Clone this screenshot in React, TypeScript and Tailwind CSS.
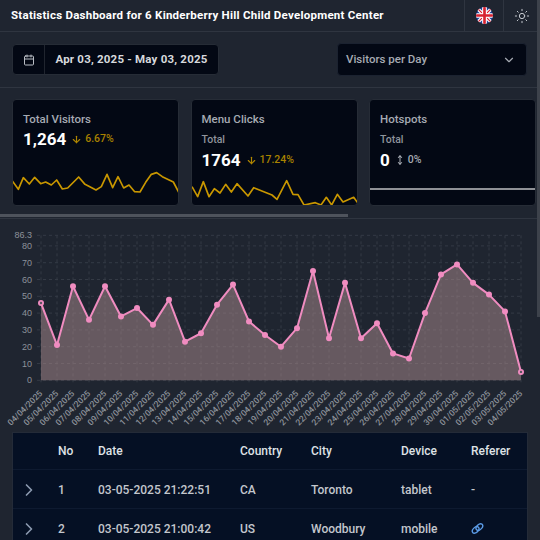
import { ArrowDown, Calendar, ChevronDown, ChevronRight, MoveVertical, Sun } from "lucide-react";

const visitors = [46, 21, 56, 36, 56, 38, 43, 33, 48, 23, 28, 45, 57, 35, 27, 20, 31, 65, 25, 58, 25, 34, 16, 13, 40, 63, 69, 58, 51, 41, 5];
const labels = [
  "04/04/2025", "05/04/2025", "06/04/2025", "07/04/2025", "08/04/2025", "09/04/2025", "10/04/2025", "11/04/2025",
  "12/04/2025", "13/04/2025", "14/04/2025", "15/04/2025", "16/04/2025", "17/04/2025", "18/04/2025", "19/04/2025",
  "20/04/2025", "21/04/2025", "22/04/2025", "23/04/2025", "24/04/2025", "25/04/2025", "26/04/2025", "27/04/2025",
  "28/04/2025", "29/04/2025", "30/04/2025", "01/05/2025", "02/05/2025", "03/05/2025", "04/05/2025",
];
const ticks = [0, 10, 20, 30, 40, 50, 60, 70, 80];

const spark1 = "34,258 52,283 67,248 85,267 101,247 119,266 134,261 151,270 167,255 184,282 200,279 233,246 252,268 285,285 301,275 318,238 335,278 351,245 368,279 384,270 401,290 417,291 434,262 451,238 467,233 484,245 517,261 536,297";
const spark2 = "570,272 587,302 604,257 621,302 637,278 654,291 671,265 688,288 705,263 738,300 755,275 810,297 825,310 854,254 873,295 888,296 906,327 940,320 957,327 973,304 989,327 1006,295 1023,318 1055,304 1072,327";

function Card({ title, sub, value, delta, flat, line, box }: { title: string; sub?: boolean; value: string; delta: string; flat?: boolean; line?: string; box?: string }) {
  return (
    <div className="w-[167px] h-[107px] shrink-0 rounded border border-[#262c36] bg-[#030814] flex flex-col overflow-hidden">
      <div className="px-[10px] pt-[11px]">
        <div className="text-[11.5px] leading-[16px] font-medium text-[#a6abb3]">{title}</div>
        {sub && <div className="text-[10.5px] leading-[14px] mt-[6px] font-medium text-[#8f949c]">Total</div>}
        <div className={`flex items-center gap-[3px] ${sub ? "mt-[1px]" : "mt-[0px]"}`}>
          <span className="text-[17px] leading-[24px] font-bold text-white mr-[2px]">{value}</span>
          {flat ? <MoveVertical className="w-[10px] h-[10px] text-[#a6abb3]" strokeWidth={2.5} /> : <ArrowDown className="w-[11px] h-[11px] text-[#b08600]" strokeWidth={2.5} />}
          <span className={`text-[10.5px] font-medium ${flat ? "text-[#a6abb3]" : "text-[#a88200]"}`}>{delta}</span>
        </div>
      </div>
      {line ? (
        <svg viewBox={box} className="w-[167px] h-[34px] mt-auto shrink-0">
          <polyline points={line} fill="none" stroke="#c99700" strokeWidth="5" strokeLinejoin="round" />
        </svg>
      ) : (
        <div className="mt-auto mb-[15px] h-[2px] bg-[#8f9196]" />
      )}
    </div>
  );
}

function VisitorsChart() {
  const x = (i: number) => 41 + i * 16;
  const y = (v: number) => 161.3 - v * 1.68;
  const pts = visitors.map((v, i) => `${x(i)},${y(v)}`).join(" ");
  return (
    <svg viewBox="0 0 536 213" className="w-[536px] h-[213px] block">
      {ticks.map((t) => (
        <line key={t} x1="37" x2="521" y1={y(t)} y2={y(t)} stroke="#343a45" strokeDasharray="3 3" strokeWidth="1" />
      ))}
      <line x1="37" x2="521" y1={y(86.3)} y2={y(86.3)} stroke="#343a45" strokeDasharray="3 3" strokeWidth="1" />
      {visitors.map((_, i) => (
        <line key={i} x1={x(i)} x2={x(i)} y1={y(86.3)} y2={165} stroke="#343a45" strokeDasharray="3 3" strokeWidth="1" />
      ))}
      <polygon points={`41,${y(0)} ${pts} 521,${y(0)}`} fill="#ad8e90" fillOpacity="0.5" />
      <polyline points={pts} fill="none" stroke="#f08cc0" strokeWidth="2" strokeLinejoin="round" />
      {visitors.map((v, i) => (
        <circle key={i} cx={x(i)} cy={y(v)} r="3" fill="#f08cc0" />
      ))}
      <circle cx={x(0)} cy={y(46)} r="1.2" fill="#5b5660" />
      <circle cx={x(30)} cy={y(5)} r="1.2" fill="#5b5660" />
      {ticks.map((t) => (
        <text key={t} x="32" y={y(t) + 3} textAnchor="end" fontSize="9" fill="#8d929a" fontFamily="Liberation Sans, sans-serif">{t}</text>
      ))}
      <text x="32" y={y(86.3) + 3} textAnchor="end" fontSize="9" fill="#8d929a" fontFamily="Liberation Sans, sans-serif">86.3</text>
      {labels.map((l, i) => (
        <text key={l} transform={`translate(${x(i) + 2} 175) rotate(-45)`} textAnchor="end" fontSize="8.5" fontWeight="500" fill="#8d929a" fontFamily="Roboto, sans-serif">{l}</text>
      ))}
    </svg>
  );
}

function UkFlag() {
  return (
    <svg viewBox="0 0 18 18" className="w-[17px] h-[17px]">
      <clipPath id="flag-round"><circle cx="9" cy="9" r="9" /></clipPath>
      <g clipPath="url(#flag-round)">
        <rect width="18" height="18" fill="#1f3f93" />
        <path d="M0 0L18 18M18 0L0 18" stroke="#fff" strokeWidth="3.6" />
        <path d="M0 0L18 18M18 0L0 18" stroke="#d8222f" strokeWidth="1.3" />
        <path d="M9 0V18M0 9H18" stroke="#fff" strokeWidth="5" />
        <path d="M9 0V18M0 9H18" stroke="#d8222f" strokeWidth="2.8" />
      </g>
    </svg>
  );
}

function RefererLink() {
  return (
    <svg viewBox="0 0 14 14" className="w-[13px] h-[13px] text-[#5b9be6]" fill="none" stroke="currentColor" strokeWidth="1.5">
      <ellipse cx="5" cy="8.5" rx="4.2" ry="2.7" transform="rotate(-45 5 8.5)" />
      <ellipse cx="9" cy="5.5" rx="4.2" ry="2.7" transform="rotate(-45 9 5.5)" />
    </svg>
  );
}

const rowCls = "grid grid-cols-[45px_40px_142px_71px_90px_70px_1fr] items-center text-[12px] font-medium text-[#c3c7cd]";

export default function App() {
  return (
    <div className="relative w-[540px] h-[540px] overflow-hidden bg-[#1f2530]" style={{ fontFamily: "Roboto, 'Noto Sans', sans-serif" }}>
      <header className="h-[32px] flex items-center justify-between border-b border-[#2f3540]">
        <h1 className="pl-[11px] text-[11.5px] font-bold text-white tracking-[0.25px]">Statistics Dashboard for 6 Kinderberry Hill Child Development Center</h1>
        <div className="flex h-full">
          <div className="w-[39px] flex items-center justify-center border-l border-[#2f3540]"><UkFlag /></div>
          <div className="w-[37px] flex items-center justify-center border-l border-[#2f3540] pr-[1px]"><Sun className="w-[16px] h-[16px] text-[#c3c7cd]" strokeWidth={1.5} /></div>
        </div>
      </header>

      <div className="h-[56px] pl-[12px] pr-[13px] flex items-center justify-between border-b border-[#2f3540]">
        <div className="flex h-[31px] w-[207px] rounded border border-[#262c36] bg-[#030814]">
          <div className="w-[32px] flex items-center justify-center border-r border-[#20252f]"><Calendar className="w-[12px] h-[12px] text-[#b9bdc4]" /></div>
          <div className="flex-1 flex items-center justify-center text-[11.5px] font-bold text-[#d6d9dd] tracking-[0.2px]">Apr 03, 2025 - May 03, 2025</div>
        </div>
        <div className="flex h-[33px] w-[190px] items-center justify-between px-[8px] rounded border border-[#1b2230] bg-[#030814]">
          <span className="text-[11.5px] font-medium text-[#a6abb3]">Visitors per Day</span>
          <ChevronDown className="w-[14px] h-[14px] mr-[2px] text-[#a6abb3]" />
        </div>
      </div>

      <div className="pt-[11px] pl-[12px] flex gap-[11.5px] overflow-hidden">
        <Card title="Total Visitors" value="1,264" delta="6.67%" line={spark1} box="36 228 501 102" />
        <Card title="Menu Clicks" sub value="1764" delta="17.24%" line={spark2} box="570 228 501 102" />
        <Card title="Hotspots" sub value="0" delta="0%" flat />
      </div>

      <div className="mt-[8px] h-[5px] border-b border-[#2f3540]">
        <div className="w-[348px] h-[3px] bg-[#4e535c]" />
      </div>

      <VisitorsChart />

      <div className="ml-[12px] w-[516px] border border-[#242b38] bg-[#051024]">
        <div className={`${rowCls} h-[37px] border-b border-[#0e1a30] font-bold text-[#dfe2e6]`}>
          <span />
          <span>No</span>
          <span>Date</span>
          <span>Country</span>
          <span>City</span>
          <span>Device</span>
          <span>Referer</span>
        </div>
        <div className={`${rowCls} h-[39px] pt-[1px] border-b border-[#0e1a30]`}>
          <ChevronRight className="ml-[6px] w-[20px] h-[20px] text-[#8c9ab0]" strokeWidth={2} />
          <span>1</span>
          <span>03-05-2025 21:22:51</span>
          <span>CA</span>
          <span>Toronto</span>
          <span>tablet</span>
          <span>-</span>
        </div>
        <div className={`${rowCls} h-[39px]`}>
          <ChevronRight className="ml-[6px] w-[20px] h-[20px] text-[#8c9ab0]" strokeWidth={2} />
          <span>2</span>
          <span>03-05-2025 21:00:42</span>
          <span>US</span>
          <span>Woodbury</span>
          <span>mobile</span>
          <RefererLink />
        </div>
      </div>

      <div className="absolute right-0 top-[0px] w-[3px] h-[317px] bg-[#3d424b]" />
    </div>
  );
}
